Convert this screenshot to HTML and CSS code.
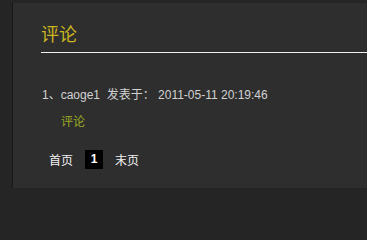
FILE: index.html
```html
<!DOCTYPE html>
<html lang="zh-CN">
<head>
<meta charset="utf-8">
<title>评论</title>
<link rel="stylesheet" href="styles.css">
</head>
<body>
<div class="page">
  <div class="panel">
    <h2 class="title">评论</h2>
    <div class="comment">
      <div class="meta">1、caoge1&nbsp; 发表于： 2011-05-11 20:19:46</div>
      <div class="body">评论</div>
    </div>
    <div class="pager">
      <a class="link">首页</a>
      <span class="current">1</span>
      <a class="link">末页</a>
    </div>
  </div>
</div>
</body>
</html>
```
FILE: styles.css
```css
html, body {
  margin: 0;
  padding: 0;
  background: #252525;
  height: 200px;
  overflow: hidden;
}
body {
  font-family: "Liberation Sans", Arial, "Noto Sans CJK SC", sans-serif;
  font-size: 12px;
  color: #d2d2d2;
}
.page {
  padding: 3px 0 0 12px;
}
.panel {
  height: 185px;
  box-sizing: border-box;
  background: #2e2e2e;
  border-left: 1px solid #181818;
  padding: 18px 0 0 28px;
}
.title {
  margin: 0;
  font-family: "Noto Sans CJK SC", sans-serif;
  font-weight: normal;
  font-size: 18px;
  line-height: 24px;
  color: #cbb521;
  padding-bottom: 7px;
  border-bottom: 1px solid #f0f0f0;
}
.comment {
  margin-top: 33px;
  padding-left: 1px;
}
.meta {
  line-height: 18px;
}
.body {
  margin-top: 8px;
  padding-left: 19px;
  line-height: 18px;
  color: #9bab1f;
  font-family: "Noto Sans CJK SC", sans-serif;
}
.pager {
  margin-top: 20px;
  padding-left: 8px;
  display: flex;
  align-items: center;
  gap: 12px;
  color: #f2f2f2;
  font-family: "Noto Sans CJK SC", sans-serif;
}
.link {
  line-height: 19px;
}
.current {
  width: 18px;
  height: 19px;
  line-height: 19px;
  text-align: center;
  background: #000;
  color: #fff;
  font-weight: bold;
  font-family: "Liberation Sans", Arial, sans-serif;
}
```
